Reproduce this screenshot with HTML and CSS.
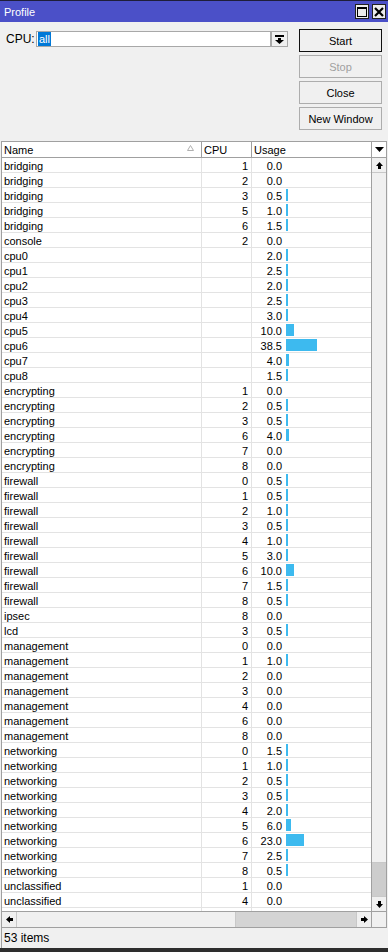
FILE: index.html
```html
<!DOCTYPE html>
<html lang="en">

<head>
    <meta charset="UTF-8">
    <meta name="viewport" content="width=device-width, initial-scale=1.0">
    <title>Profile</title>
    <link rel="stylesheet" href="styles.css">
</head>

<body>
    <div class="window">
        <div class="titlebar">
            <span class="title">Profile</span>
            <div class="title-btns">
                <span class="tbtn">
                    <svg width="10" height="10" viewBox="0 0 10 10"><rect x="0.5" y="0.5" width="9" height="9" fill="none" stroke="#000" stroke-width="1"/><rect x="0" y="0" width="10" height="2" fill="#000"/></svg>
                </span>
                <span class="tbtn">
                    <svg width="10" height="10" viewBox="0 0 10 10"><path d="M1 1 L9 9 M9 1 L1 9" stroke="#000" stroke-width="2.2"/></svg>
                </span>
            </div>
        </div>

        <div class="top">
            <div class="cpu-field">
                <span class="cpu-label">CPU:</span>
                <div class="combo-input"><span class="sel">all</span></div>
                <div class="combo-btn">
                    <svg width="9" height="9" viewBox="0 0 9 9"><rect x="0" y="0" width="9" height="2" fill="#000"/><rect x="3" y="3" width="3" height="2" fill="#000"/><polygon points="0,5 9,5 4.5,9" fill="#000"/></svg>
                </div>
            </div>
            <div class="actions">
                <button class="btn btn-default">Start</button>
                <button class="btn" disabled>Stop</button>
                <button class="btn">Close</button>
                <button class="btn">New Window</button>
            </div>
        </div>

        <div class="list">
            <div class="list-head">
                <div class="hcell col-name">Name
                    <svg class="sort" width="7" height="6" viewBox="0 0 7 6"><polygon points="3.5,0.5 6.5,5.5 0.5,5.5" fill="none" stroke="#b0b0b0" stroke-width="1"/></svg>
                </div>
                <div class="hcell col-cpu">CPU</div>
                <div class="hcell col-usage">Usage</div>
                <div class="hcell col-menu">
                    <svg width="9" height="5" viewBox="0 0 9 5"><polygon points="0,0 9,0 4.5,5" fill="#000"/></svg>
                </div>
            </div>
            <div class="list-body">
                <div class="rows" id="rows"></div>
                <div class="vscroll">
                    <div class="sbtn">
                        <svg width="7" height="7" viewBox="0 0 7 7"><polygon points="3.5,0 7,4 5,4 5,7 2,7 2,4 0,4" fill="#000"/></svg>
                    </div>
                    <div class="thumb-v"></div>
                    <div class="track-v"></div>
                    <div class="sbtn sbtn-down">
                        <svg width="7" height="7" viewBox="0 0 7 7"><polygon points="3.5,7 7,3 5,3 5,0 2,0 2,3 0,3" fill="#000"/></svg>
                    </div>
                </div>
            </div>
            <div class="hscroll">
                <div class="sbtn-h">
                    <svg width="7" height="7" viewBox="0 0 7 7"><polygon points="0,3.5 4,0 4,2 7,2 7,5 4,5 4,7" fill="#000"/></svg>
                </div>
                <div class="thumb-h"></div>
                <div class="track-h"></div>
                <div class="sbtn-h sbtn-right">
                    <svg width="7" height="7" viewBox="0 0 7 7"><polygon points="7,3.5 3,0 3,2 0,2 0,5 3,5 3,7" fill="#000"/></svg>
                </div>
                <div class="corner"></div>
            </div>
        </div>

        <div class="status"><span>53 items</span></div>
    </div>

    <script>
        const lignes = [
            ["bridging", "1", 0.0], ["bridging", "2", 0.0], ["bridging", "3", 0.5], ["bridging", "5", 1.0],
            ["bridging", "6", 1.5], ["console", "2", 0.0],
            ["cpu0", "", 2.0], ["cpu1", "", 2.5], ["cpu2", "", 2.0], ["cpu3", "", 2.5], ["cpu4", "", 3.0],
            ["cpu5", "", 10.0], ["cpu6", "", 38.5], ["cpu7", "", 4.0], ["cpu8", "", 1.5],
            ["encrypting", "1", 0.0], ["encrypting", "2", 0.5], ["encrypting", "3", 0.5], ["encrypting", "6", 4.0],
            ["encrypting", "7", 0.0], ["encrypting", "8", 0.0],
            ["firewall", "0", 0.5], ["firewall", "1", 0.5], ["firewall", "2", 1.0], ["firewall", "3", 0.5],
            ["firewall", "4", 1.0], ["firewall", "5", 3.0], ["firewall", "6", 10.0], ["firewall", "7", 1.5],
            ["firewall", "8", 0.5], ["ipsec", "8", 0.0], ["lcd", "3", 0.5],
            ["management", "0", 0.0], ["management", "1", 1.0], ["management", "2", 0.0], ["management", "3", 0.0],
            ["management", "4", 0.0], ["management", "6", 0.0], ["management", "8", 0.0],
            ["networking", "0", 1.5], ["networking", "1", 1.0], ["networking", "2", 0.5], ["networking", "3", 0.5],
            ["networking", "4", 2.0], ["networking", "5", 6.0], ["networking", "6", 23.0], ["networking", "7", 2.5],
            ["networking", "8", 0.5], ["unclassified", "1", 0.0], ["unclassified", "4", 0.0],
            ["unclassified", "6", 0.0]
        ];

        const rows = document.getElementById("rows");
        lignes.forEach(([nom, cpu, usage]) => {
            let barre = "";
            if (usage > 0) {
                const w = Math.max(2, Math.round(usage * 0.8));
                barre = `<span class="bar" style="width:${w}px"></span>`;
            }
            rows.innerHTML += `
            <div class="row">
                <div class="cell col-name">${nom}</div>
                <div class="cell col-cpu">${cpu}</div>
                <div class="cell col-usage"><span class="val">${usage.toFixed(1)}</span>${barre}</div>
            </div>`;
        });
    </script>
</body>

</html>
```

FILE: styles.css
```css
* {
    box-sizing: border-box;
}

body {
    margin: 0;
    width: 388px;
    height: 952px;
    overflow: hidden;
    background: #f0f0f0;
    font-family: "Liberation Sans", Arial, sans-serif;
    font-size: 11px;
    color: #000;
}

.window {
    height: 952px;
    display: flex;
    flex-direction: column;
    border-bottom: 4px solid #2e2e2e;
}

/* title bar */
.titlebar {
    height: 22px;
    flex: none;
    display: flex;
    align-items: center;
    justify-content: space-between;
    background: #4b50c8;
    border-top: 1px solid #1e1e3a;
    padding: 0 2px 0 4px;
}

.title {
    color: #fff;
    font-size: 11px;
    padding-top: 1px;
}

.title-btns {
    display: flex;
    gap: 3px;
}

.tbtn {
    width: 14px;
    height: 15px;
    display: flex;
    align-items: center;
    justify-content: center;
    background: #ececec;
    border: 1px solid #202020;
}

/* top controls */
.top {
    height: 119px;
    flex: none;
    display: flex;
    padding: 7px 6px 0 6px;
}

.cpu-field {
    display: flex;
    align-items: center;
    height: 16px;
    margin-top: 2px;
}

.cpu-label {
    width: 30px;
    font-size: 12px;
}

.combo-input {
    width: 235px;
    height: 16px;
    background: #fff;
    border: 1px solid #a8a8a8;
    padding: 0 1px;
    display: flex;
    align-items: center;
}

.sel {
    background: #0078d7;
    color: #fff;
    line-height: 14px;
    padding: 0 1px;
}

.combo-btn {
    width: 17px;
    height: 16px;
    border: 1px solid #a8a8a8;
    background: #f0f0f0;
    display: flex;
    align-items: center;
    justify-content: center;
}

.actions {
    margin-left: auto;
    width: 83px;
    display: flex;
    flex-direction: column;
    gap: 3px;
}

.btn {
    height: 23px;
    padding: 0;
    background: #f0f0f0;
    border: 1px solid #adadad;
    font-family: inherit;
    font-size: 11px;
    color: #000;
}

.btn-default {
    border-color: #111;
}

.btn:disabled {
    color: #a0a0a0;
}

/* list */
.list {
    height: 787px;
    flex: none;
    width: 386px;
    margin-left: 1px;
    border: 1px solid #a0a0a0;
    background: #fff;
    display: flex;
    flex-direction: column;
}

.list-head {
    height: 16px;
    flex: none;
    display: flex;
    border-bottom: 1px solid #a0a0a0;
}

.hcell {
    padding-top: 2px;
    line-height: 13px;
    border-right: 1px solid #a0a0a0;
    padding-left: 2px;
}

.hcell.col-name {
    position: relative;
}

.sort {
    position: absolute;
    right: 7px;
    top: 3px;
}

.col-name {
    width: 200px;
}

.col-cpu {
    width: 50px;
}

.col-usage {
    width: 119px;
}

.hcell.col-usage {
    border-right: none;
}

.col-menu {
    width: 15px;
    border-left: 1px solid #a0a0a0;
    border-right: none;
    padding: 0;
    display: flex;
    align-items: center;
    justify-content: center;
}

.list-body {
    flex: 1;
    display: flex;
    overflow: hidden;
}

.rows {
    width: 369px;
    overflow: hidden;
}

.row {
    height: 15px;
    display: flex;
    border-bottom: 1px solid #e3e3e3;
}

.cell {
    padding-top: 2px;
    line-height: 12px;
    border-right: 1px solid #e3e3e3;
    white-space: nowrap;
}

.cell.col-name {
    padding-left: 2px;
}

.cell.col-cpu {
    text-align: right;
    padding-right: 3px;
}

.cell.col-usage {
    display: flex;
    align-items: center;
    padding-top: 0;
    border-right: none;
}

.val {
    width: 30px;
    text-align: right;
    padding-top: 2px;
    line-height: 12px;
}

.bar {
    height: 12px;
    margin-left: 4px;
    background: #3dbaef;
}

/* scrollbars */
.vscroll {
    width: 15px;
    border-left: 1px solid #a0a0a0;
    display: flex;
    flex-direction: column;
}

.sbtn {
    height: 15px;
    flex: none;
    display: flex;
    align-items: center;
    justify-content: center;
    background: #f0f0f0;
    border-bottom: 1px solid #c8c8c8;
}

.sbtn-down {
    border-bottom: none;
    border-top: 1px solid #c8c8c8;
}

.thumb-v {
    flex: 1;
    background: #f0f0f0;
    border-bottom: 1px solid #c8c8c8;
}

.track-v {
    height: 33px;
    flex: none;
    background: #cdcdcd;
}

.hscroll {
    height: 16px;
    flex: none;
    display: flex;
    border-top: 1px solid #a0a0a0;
    background: #f0f0f0;
}

.sbtn-h {
    width: 15px;
    display: flex;
    align-items: center;
    justify-content: center;
    border-right: 1px solid #c8c8c8;
}

.sbtn-right {
    border-right: none;
    border-left: 1px solid #c8c8c8;
}

.thumb-h {
    width: 219px;
    border-right: 1px solid #c8c8c8;
}

.track-h {
    flex: 1;
    background: #d4d4d4;
}

.corner {
    width: 15px;
    border-left: 1px solid #a0a0a0;
}

/* status bar */
.status {
    height: 20px;
    flex: none;
    display: flex;
    align-items: center;
    margin-left: 1px;
    padding-left: 2px;
    border-left: 1px solid #a0a0a0;
    font-size: 12px;
}
```
